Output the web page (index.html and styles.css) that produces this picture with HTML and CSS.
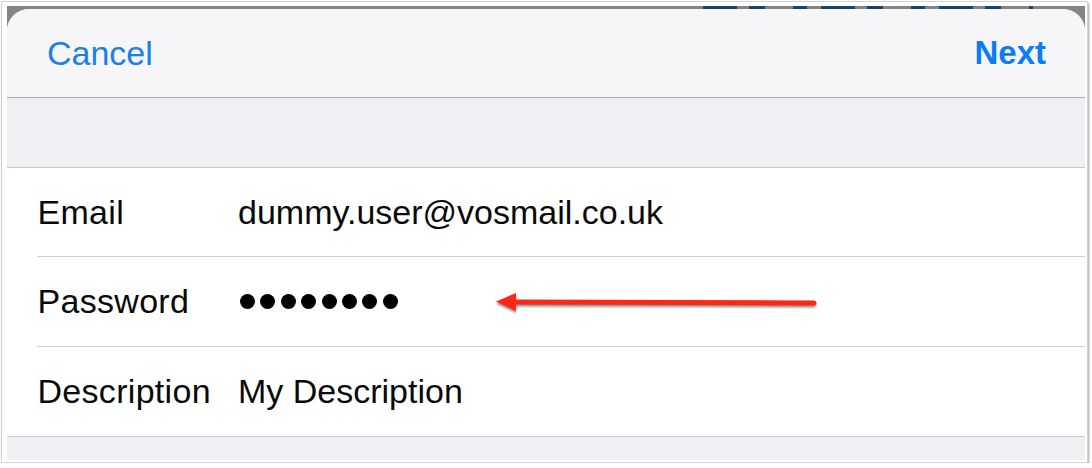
FILE: index.html
```html
<!DOCTYPE html>
<html lang="en">
<head>
<meta charset="utf-8">
<title>Account</title>
<link rel="stylesheet" href="styles.css">
</head>
<body>
<div class="frame">
  <div class="shot">
    <div class="backdrop-strip" aria-hidden="true"></div>
    <div class="sheet">
      <header class="navbar">
        <span class="nav-btn cancel">Cancel</span>
        <span class="nav-btn next">Next</span>
      </header>
      <div class="group-gap"></div>
      <div class="group">
        <div class="row row-first">
          <span class="label">Email</span>
          <span class="value">dummy.user@vosmail.co.uk</span>
        </div>
        <div class="row">
          <span class="label">Password</span>
          <span class="value dots" aria-label="password hidden">
            <i class="dot"></i><i class="dot"></i><i class="dot"></i><i class="dot"></i><i class="dot"></i><i class="dot"></i><i class="dot"></i><i class="dot"></i>
          </span>
        </div>
        <div class="row row-last">
          <span class="label">Description</span>
          <span class="value">My Description</span>
        </div>
      </div>
      <div class="group-foot"></div>
    </div>
    <svg class="arrow" width="340" height="28" viewBox="0 0 340 28" aria-hidden="true">
      <line x1="28" y1="14" x2="328" y2="15" stroke="#ff2616" stroke-width="5" stroke-linecap="round"/>
      <polygon points="10,13.5 30,5 30,23" fill="#ff2616"/>
    </svg>
  </div>
</div>
</body>
</html>
```

FILE: styles.css
```css
html, body {
  margin: 0;
  padding: 0;
  background: #ffffff;
}

body {
  font-family: "Liberation Sans", Arial, sans-serif;
  color: #000;
}

.frame {
  margin: 1px 0 0 1px;
  width: 1087px;
  height: 462px;
  border: 1px solid #d2d2d2;
  padding: 4px 0 0 5px;
  box-sizing: border-box;
  box-shadow: 1px 2px 2px rgba(0, 0, 0, 0.35);
  background: #fff;
}

.shot {
  position: relative;
  width: 1078px;
  height: 454px;
  background: #858585;
  overflow: hidden;
}

.backdrop-strip {
  position: absolute;
  left: 696px;
  top: 0;
  width: 330px;
  height: 3px;
  background: repeating-linear-gradient(90deg,
    #17446b 0 34px, transparent 34px 46px,
    #17446b 46px 62px, transparent 62px 90px,
    #17446b 90px 104px, transparent 104px 118px);
}

.sheet {
  position: relative;
  margin-top: 3px;
  height: 451px;
  border-radius: 22px 22px 0 0;
  overflow: hidden;
  background: #efeff4;
  display: flex;
  flex-direction: column;
}

.navbar {
  height: 88px;
  flex: none;
  background: #f6f6f8;
  border-bottom: 1px solid #acacb0;
  display: flex;
  align-items: center;
  justify-content: space-between;
  padding: 0 39px 0 40px;
  font-size: 34px;
}

.cancel {
  color: #1a80e8;
}

.next {
  color: #0a7cf5;
  font-weight: 700;
  font-size: 33px;
}

.group-gap {
  height: 69px;
  flex: none;
  background: #efeff4;
  border-bottom: 1px solid #c8c7cc;
}

.group {
  background: #ffffff;
  border-bottom: 1px solid #c8c7cc;
  flex: none;
}

.row {
  margin-left: 30px;
  height: 89px;
  border-bottom: 1px solid #d0d0d4;
  display: grid;
  grid-template-columns: 201px 1fr;
  align-items: center;
  font-size: 34px;
  color: #0a0a0a;
}

.row-first {
  height: 88px;
}

.row-last {
  border-bottom: none;
}

.label {
  padding-left: 0.5px;
  letter-spacing: 0.3px;
}

.dots {
  display: flex;
  gap: 5.4px;
  padding-left: 2px;
}

.dot {
  display: block;
  width: 15px;
  height: 15px;
  border-radius: 50%;
  background: #000;
}

.group-foot {
  flex: 1;
  background: #efeff4;
}

.arrow {
  position: absolute;
  left: 479px;
  top: 282px;
  filter: drop-shadow(0 2px 1.2px rgba(0, 0, 0, 0.45));
}
```
